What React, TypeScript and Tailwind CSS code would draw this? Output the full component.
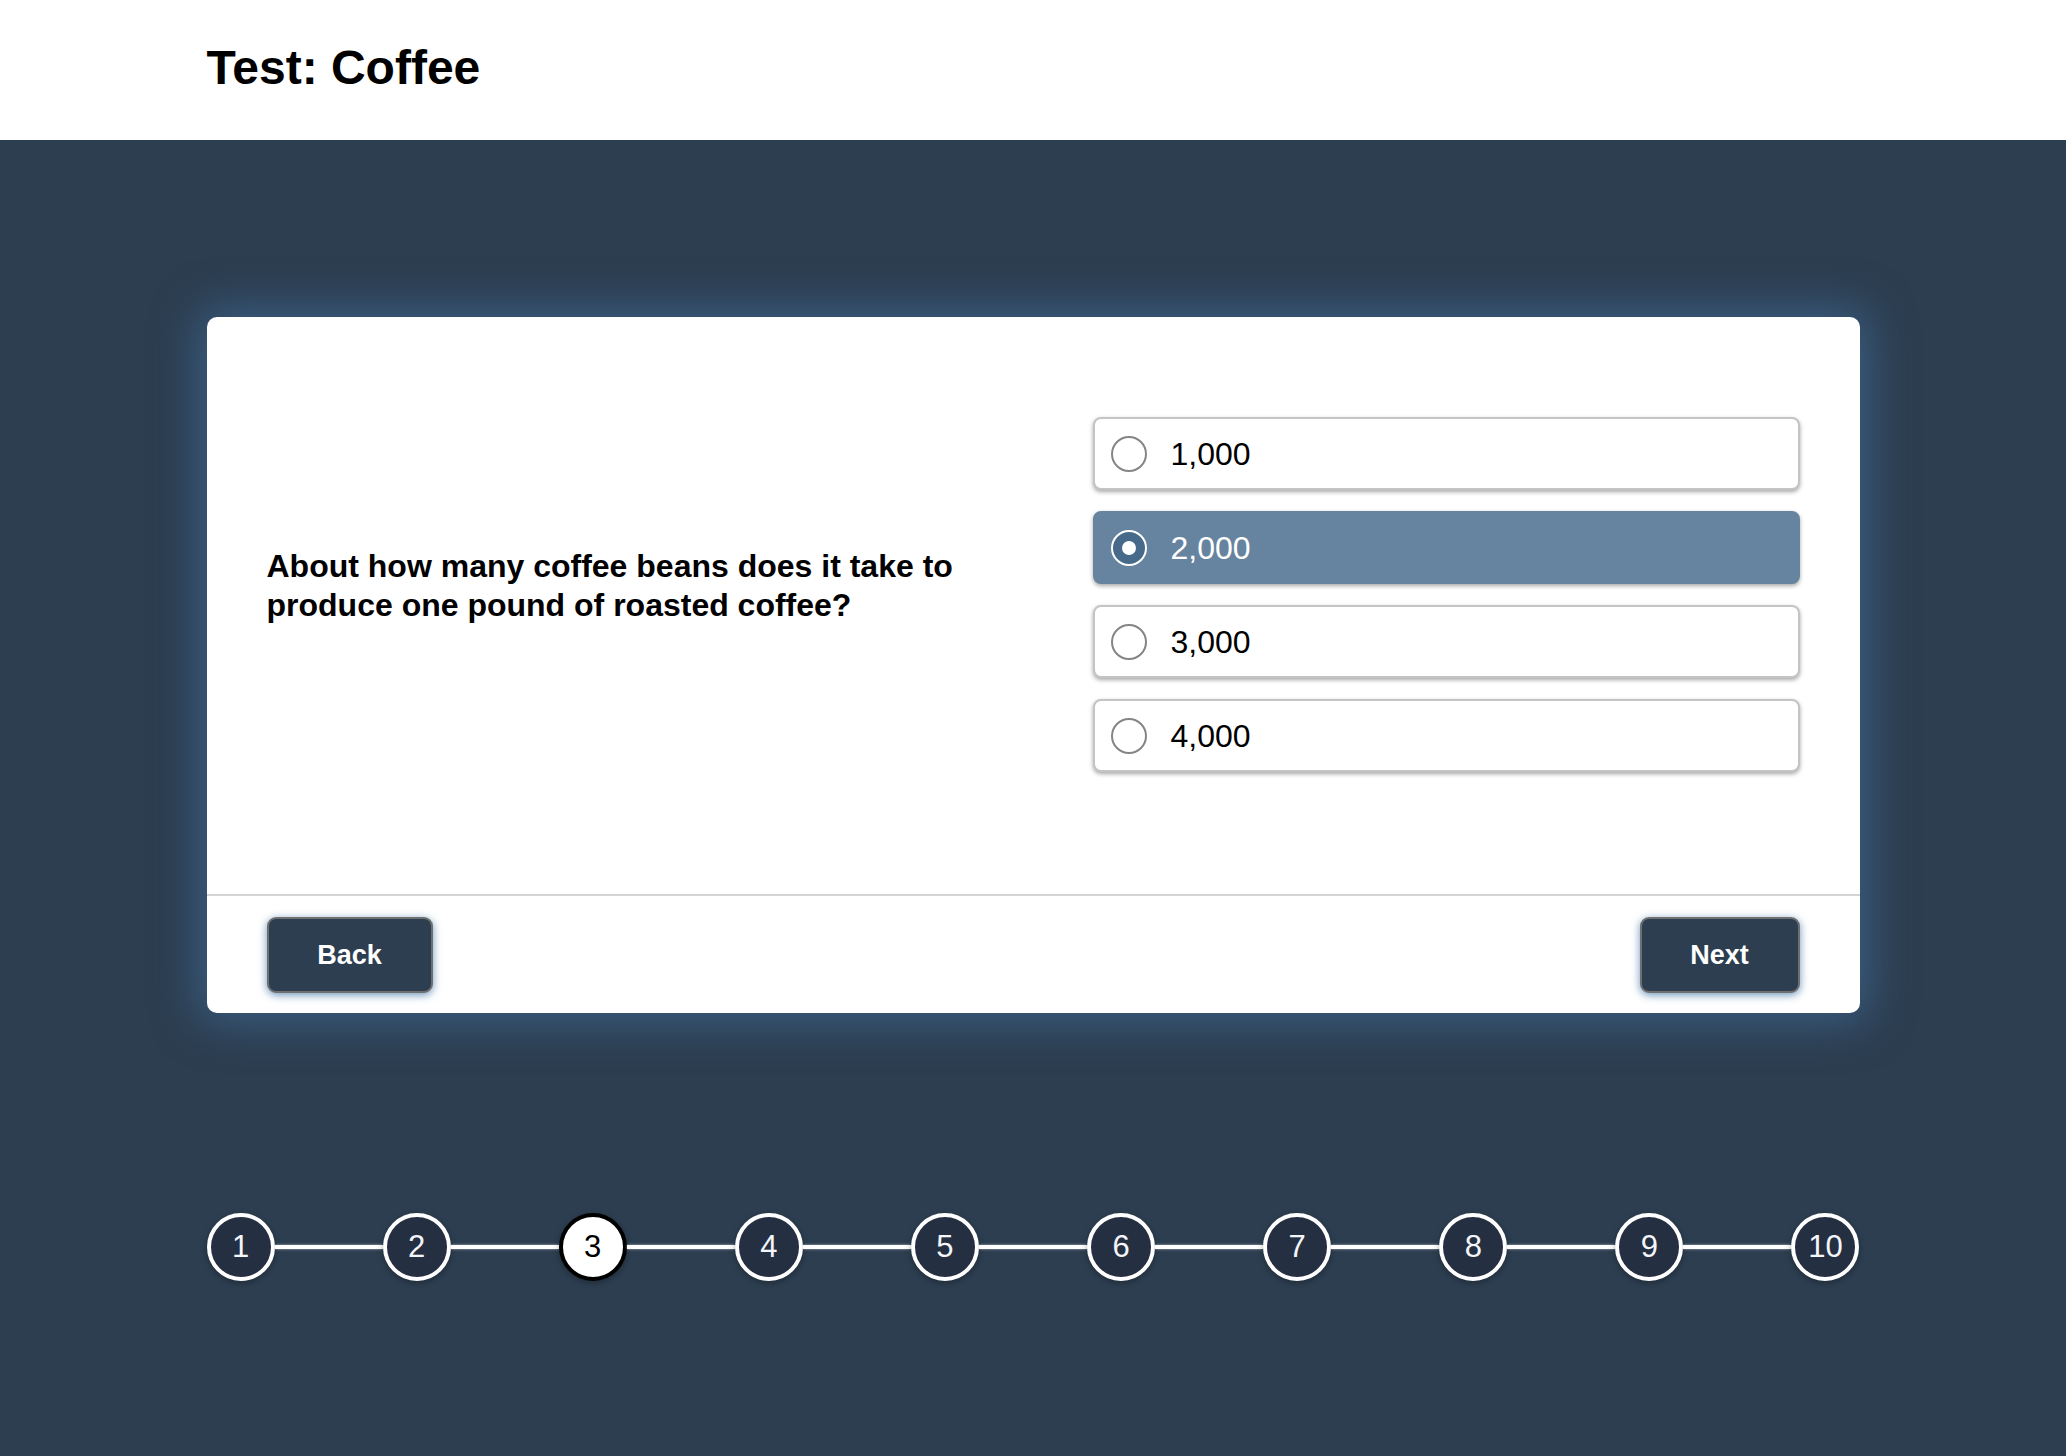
import React, { useState } from "react";

const options = ["1,000", "2,000", "3,000", "4,000"];
const steps = [1, 2, 3, 4, 5, 6, 7, 8, 9, 10];

const App = () => {
  const [selected, setSelected] = useState(1);
  const current = 3;

  return (
    <div className="min-h-screen bg-[#2c3e50] font-['Liberation_Sans',Arial,sans-serif]">
      <header className="h-[140px] bg-white flex items-center">
        <h1 className="w-[1653px] mx-auto text-[48px] font-bold text-black pb-[4px]">
          Test: Coffee
        </h1>
      </header>

      <main className="w-[1653px] mx-auto pt-[177px]">
        <div className="bg-white rounded-[10px] shadow-[0_0_45px_8px_rgba(62,100,140,0.85)]">
          <div className="flex px-[60px] pt-[100px] pb-[100px] min-h-[577px]">
            <div className="w-[826px] flex items-center pb-[40px]">
              <p className="max-w-[740px] text-[32px] font-bold leading-[1.2] text-black">
                About how many coffee beans does it take to produce one pound of
                roasted coffee?
              </p>
            </div>
            <div className="flex-1 flex flex-col gap-[21px]">
              {options.map((opt, i) => {
                const active = i === selected;
                return (
                  <button
                    key={opt}
                    onClick={() => setSelected(i)}
                    className={`h-[73px] flex items-center gap-[24px] px-[16px] rounded-[8px] border-2 text-[32px] text-left shadow-[0_2px_4px_rgba(0,0,0,0.35)] ${
                      active
                        ? "bg-[#66849f] border-[#66849f] text-white"
                        : "bg-white border-[#c4c4c4] text-black"
                    }`}
                  >
                    <span
                      className={`w-[36px] h-[36px] rounded-full flex items-center justify-center ${
                        active
                          ? "border-[2px] border-white bg-[#486a8a]"
                          : "border-[2px] border-[#858585] bg-white"
                      }`}
                    >
                      {active && (
                        <span className="w-[14px] h-[14px] rounded-full bg-white" />
                      )}
                    </span>
                    <span className="leading-none">{opt}</span>
                  </button>
                );
              })}
            </div>
          </div>
          <div className="border-t-2 border-[#d4d4d4] flex justify-between px-[60px] pt-[21px] pb-[20px]">
            <button className="h-[76px] w-[166px] rounded-[9px] border-2 border-[#6f6f6f] bg-[#2c3e50] text-white text-[27px] font-bold shadow-[0_2px_8px_rgba(70,120,170,0.8)]">
              Back
            </button>
            <button className="h-[76px] w-[160px] rounded-[9px] border-2 border-[#6f6f6f] bg-[#2c3e50] text-white text-[27px] font-bold shadow-[0_2px_8px_rgba(70,120,170,0.8)]">
              Next
            </button>
          </div>
        </div>

        <div className="mt-[200px] flex items-center">
          {steps.map((n, i) => (
            <React.Fragment key={n}>
              {i > 0 && (
                <div className="flex-1 h-[4px] bg-white shadow-[0_0_3px_rgba(255,255,255,0.6)]" />
              )}
              <div
                className={`w-[68px] h-[68px] shrink-0 rounded-full border-[4px] flex items-center justify-center text-[31px] shadow-[0_2px_6px_rgba(0,0,0,0.3)] ${
                  n === current
                    ? "bg-white border-black text-black"
                    : "bg-[#252f42] border-white text-[#f4f6fa]"
                }`}
              >
                {n}
              </div>
            </React.Fragment>
          ))}
        </div>
      </main>
    </div>
  );
};

export default App;
